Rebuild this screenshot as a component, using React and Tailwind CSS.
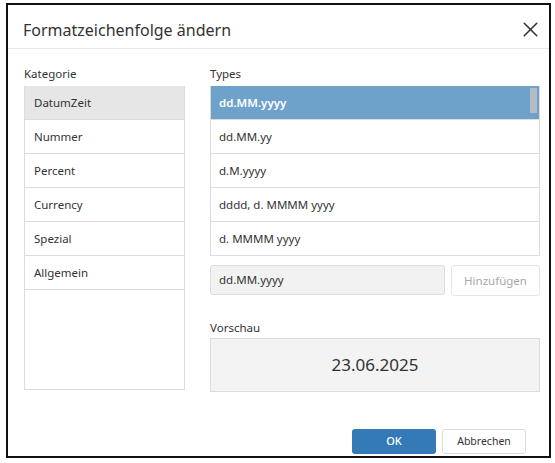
import { X } from "lucide-react";

const CATEGORIES = ["DatumZeit", "Nummer", "Percent", "Currency", "Spezial", "Allgemein"];
const TYPES = ["dd.MM.yyyy", "dd.MM.yy", "d.M.yyyy", "dddd, d. MMMM yyyy", "d. MMMM yyyy"];

const FONT = { fontFamily: '"Noto Sans", "Open Sans", sans-serif' };

export default function App() {
  return (
    <div className="w-[555px] h-[463px] bg-white pt-[3px] pl-[6px]" style={FONT}>
      <div className="w-[545px] h-[455px] border-2 border-[#111] flex flex-col text-[#333]">
        {/* Header */}
        <div className="h-[44px] pt-[6px] flex items-center justify-between pl-[15px] pr-[6px] border-b border-[#e8e8e8]">
          <h1 className="text-[16px] text-[#333]">Formatzeichenfolge ändern</h1>
          <X className="w-[25px] h-[25px] text-[#333]" strokeWidth={1.5} />
        </div>

        {/* Body */}
        <div className="flex pl-[16px] pr-[9px] pt-[16px] gap-[25px]">
          {/* Kategorie */}
          <div className="w-[161px] flex flex-col">
            <div className="h-[21px] text-[11.5px] leading-[17px] text-[#333]">Kategorie</div>
            <div className="h-[304px] border border-[#dcdcdc] border-t-0">
              {CATEGORIES.map((c, i) => (
                <div
                  key={c}
                  className={`h-[34px] flex items-center pl-[9px] text-[11.5px] border-b border-[#dcdcdc] ${
                    i === 0 ? "bg-[#e6e6e6]" : "bg-white"
                  }`}
                >
                  {c}
                </div>
              ))}
            </div>
          </div>

          {/* Types */}
          <div className="w-[330px] flex flex-col">
            <div className="h-[21px] text-[11.5px] leading-[17px] text-[#333]">Types</div>
            <div className="relative h-[170px] border border-[#dcdcdc] border-t-0">
              {TYPES.map((t, i) => (
                <div
                  key={t}
                  className={`h-[34px] flex items-center pl-[8px] text-[11.5px] border-b border-[#dcdcdc] ${
                    i === 0 ? "bg-[#6fa2cb] text-white font-semibold" : "bg-white"
                  }`}
                >
                  {t}
                </div>
              ))}
              <div className="absolute right-[2px] top-[2px] w-[7px] h-[25px] bg-[#b3bcc5]" />
            </div>

            <div className="flex gap-[6px] mt-[9px]">
              <div className="w-[235px] h-[30px] flex items-center pl-[8px] text-[11.5px] bg-[#f2f2f2] border border-[#dcdcdc] rounded-[3px]">
                dd.MM.yyyy
              </div>
              <button className="w-[89px] h-[31px] text-[11.5px] text-[#a8a8a8] bg-white border border-[#e6e6e6] rounded-[3px]">
                Hinzufügen
              </button>
            </div>

            <div className="h-[20px] mt-[22px] text-[11.5px] leading-[20px]">Vorschau</div>
            <div className="h-[54px] flex items-center justify-center text-[17px] text-[#333] bg-[#f3f3f3] border border-[#dcdcdc]">
              23.06.2025
            </div>
          </div>
        </div>

        {/* Footer */}
        <div className="flex justify-end gap-[6px] pr-[23px] mt-[37px]">
          <button className="w-[84px] h-[25px] text-[11px] font-medium text-white bg-[#337ab7] rounded-[3px]">
            OK
          </button>
          <button className="w-[84px] h-[25px] text-[10.5px] text-[#333] bg-white border border-[#dcdcdc] rounded-[3px]">
            Abbrechen
          </button>
        </div>
      </div>
    </div>
  );
}
